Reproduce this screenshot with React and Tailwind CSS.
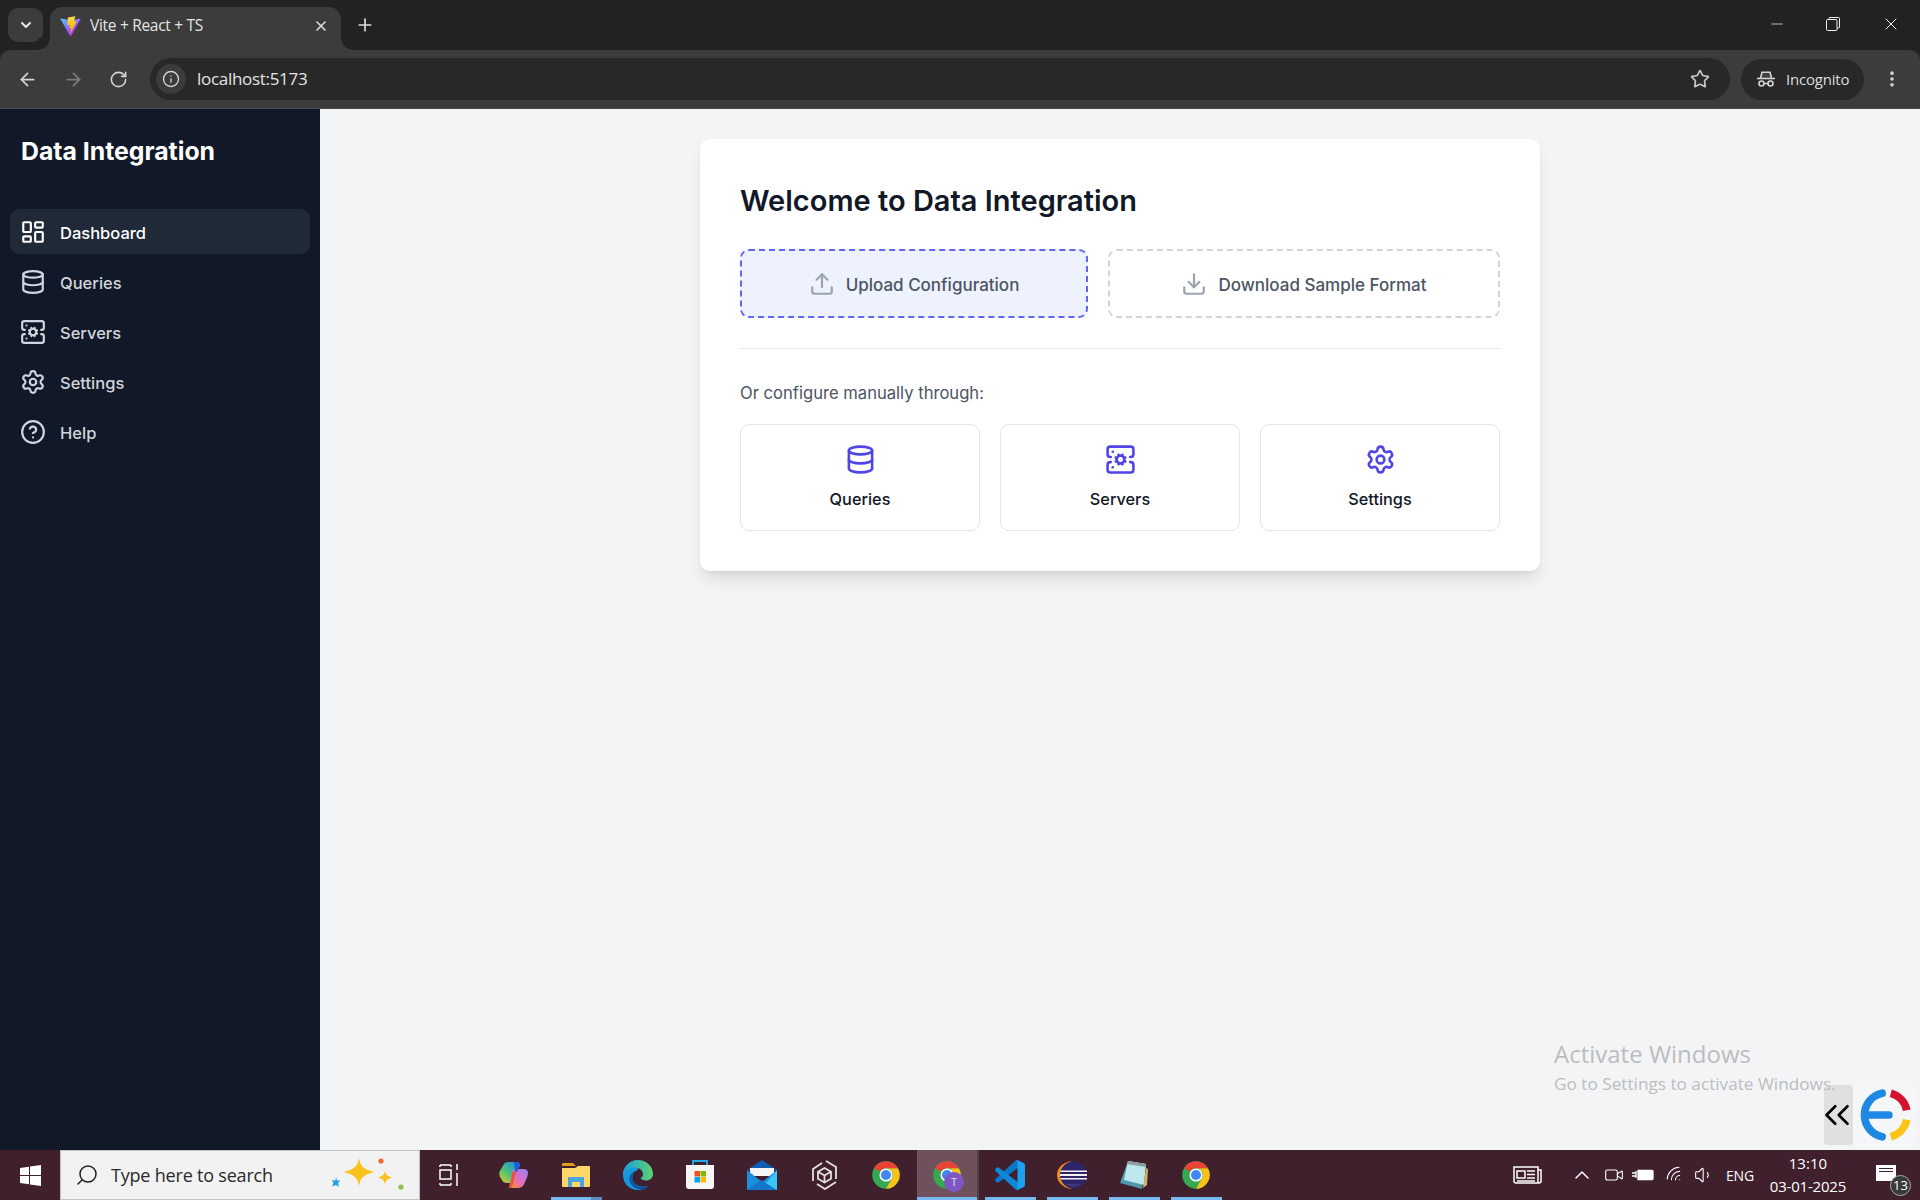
import { LayoutDashboard, Database, ServerCog, Settings, CircleHelp, Upload, Download, ArrowLeft, ArrowRight, RotateCw, Info, Star, X, Plus, ChevronDown, ChevronUp, EllipsisVertical, Search, Minus, ChevronsLeft, Volume1, Video, Wifi } from 'lucide-react';

const NAV = [
  { label: 'Dashboard', icon: LayoutDashboard, active: true },
  { label: 'Queries', icon: Database },
  { label: 'Servers', icon: ServerCog },
  { label: 'Settings', icon: Settings },
  { label: 'Help', icon: CircleHelp },
];

const SHORTCUTS = [
  { label: 'Queries', icon: Database },
  { label: 'Servers', icon: ServerCog },
  { label: 'Settings', icon: Settings },
];

const ViteIcon = () => (
  <svg width="21" height="21" viewBox="0 0 410 404">
    <defs>
      <linearGradient id="vite-a" x1="6" y1="33" x2="235" y2="344" gradientUnits="userSpaceOnUse">
        <stop offset="0" stopColor="#41d1ff" />
        <stop offset="1" stopColor="#bd34fe" />
      </linearGradient>
      <linearGradient id="vite-b" x1="194" y1="8" x2="236" y2="292" gradientUnits="userSpaceOnUse">
        <stop offset="0" stopColor="#ffea83" />
        <stop offset="0.08" stopColor="#ffdd35" />
        <stop offset="1" stopColor="#ffa800" />
      </linearGradient>
    </defs>
    <path d="M399.641 59.525 215.643 388.545c-3.799 6.793-13.558 6.833-17.415.073L10.582 59.556C6.380 52.190 12.680 43.266 21.028 44.758l184.195 32.923c1.175.21 2.378.208 3.553-.006l180.343-32.871c8.320-1.517 14.649 7.337 10.522 14.721Z" fill="url(#vite-a)" />
    <path d="M292.965 1.574 156.801 28.255a5 5 0 0 0-4.030 4.611l-8.376 141.464c-.197 3.332 2.863 5.918 6.115 5.168l37.910-8.749c3.547-.818 6.752 2.306 6.023 5.873l-11.263 55.153c-.758 3.712 2.727 6.886 6.352 5.785l23.415-7.114c3.630-1.102 7.118 2.081 6.350 5.796l-17.899 86.633c-1.120 5.419 6.088 8.374 9.094 3.728l2.008-3.103 110.955-221.428c1.858-3.707-1.346-7.935-5.418-7.150l-39.022 7.530c-3.667.707-6.787-2.708-5.752-6.296l25.469-88.291c1.036-3.594-2.095-7.012-5.766-6.291Z" fill="url(#vite-b)" />
  </svg>
);

const ChromeIcon = ({ size = 30 }) => (
  <svg width={size} height={size} viewBox="0 0 48 48">
    <circle cx="24" cy="24" r="22" fill="#34a853" />
    <path d="M43 13A22 22 0 0 1 24 46L33.5 29.5A11 11 0 0 0 24 13Z" fill="#fbc116" />
    <path d="M24 2A22 22 0 0 1 43 13H24A11 11 0 0 0 14.5 18.5L5 13A22 22 0 0 1 24 2Z" fill="#ea4335" />
    <circle cx="24" cy="24" r="10.5" fill="#fff" />
    <circle cx="24" cy="24" r="8" fill="#4285f4" />
  </svg>
);

const IncognitoIcon = () => (
  <svg width="20" height="20" viewBox="0 0 20 20" fill="none" stroke="#d4d4d4" strokeWidth="1.6">
    <path d="M4.5 9 6 3.2h8L15.5 9" fill="#d4d4d4" fillOpacity="0.15" />
    <path d="M1 9.5h18" />
    <circle cx="5.5" cy="14.5" r="2.5" />
    <circle cx="14.5" cy="14.5" r="2.5" />
    <path d="M8 14.5h4" />
  </svg>
);

const RestoreIcon = () => (
  <svg width="14" height="14" viewBox="0 0 14 14" fill="none" stroke="#f0f0f0" strokeWidth="1">
    <rect x="0.5" y="2.5" width="10.5" height="11" rx="1" />
    <path d="M3 2.5V1.5a1 1 0 0 1 1-1h8.5a1 1 0 0 1 1 1V10a1 1 0 0 1-1 1H11" />
  </svg>
);

const WindowsLogo = () => (
  <svg width="21" height="21" viewBox="0 0 21 21" fill="#fff">
    <path d="M0 3 9 1.7V10H0ZM10 1.5 21 0V10H10ZM0 11H9V19.3L0 18ZM10 11H21V21L10 19.5Z" />
  </svg>
);

const Sparkles = () => (
  <svg width="80" height="36" viewBox="0 0 80 36">
    <path d="M30 1c1.5 8 4 11 15 14-11 3-13.500 6-15 14-1.500-8-4-11-15-14 11-3 13.500-6 15-14Z" fill="#fcc21b" />
    <path d="M56 14c.8 3.500 2 5 7 6.500-5 1.500-6.200 3-7 7-.8-4-2-5.500-7-7 5-1.500 6.200-3 7-6.500Z" fill="#fcc21b" />
    <circle cx="52" cy="4" r="2.6" fill="#f4692b" />
    <circle cx="72" cy="30" r="2.6" fill="#8bc34a" />
    <path d="M7 20l1 3.500 3.500 0-2.500 2.500 1 4-3-2-4 1.500 1.500-3.500-1.500-3 3.500.5Z" fill="#1ea1e8" />
  </svg>
);

const TaskView = () => (
  <svg width="20" height="24" viewBox="0 0 20 24" fill="none" stroke="#fff" strokeWidth="1.5">
    <path d="M1 2h11M1 22h11M1 22v-2M12 22v-2M1 2v2M12 2v2" />
    <rect x="1" y="7" width="11" height="9" />
    <path d="M18 1v6M18 10v13" />
  </svg>
);

const Copilot = () => (
  <svg width="30" height="28" viewBox="0 0 30 28">
    <defs>
      <linearGradient id="cop-a" x1="0" y1="1" x2="0.8" y2="0">
        <stop offset="0" stopColor="#f7c22c" />
        <stop offset="0.45" stopColor="#52c66d" />
        <stop offset="1" stopColor="#1c8fe6" />
      </linearGradient>
      <linearGradient id="cop-b" x1="0.9" y1="0" x2="0.2" y2="1">
        <stop offset="0" stopColor="#9a7cf0" />
        <stop offset="0.6" stopColor="#e56fc0" />
        <stop offset="1" stopColor="#f7893a" />
      </linearGradient>
    </defs>
    <path d="M10 1h7c2 0 4 1 4 3 0 0-1.500 4-3 7l-5 11H8c-4 0-5-3-5-3L1 16c-1-2-1-5 1-8l3-5c1-1.500 3-2 5-2Z" fill="url(#cop-a)" />
    <path d="M15 8h9c3 0 5 1 5 4 0 2-1 5-2.500 8l-2 4c-1 2-3 3-6 3h-5c-2 0-3-1-3-3l2-9c.5-3 1-7 2.500-7Z" fill="url(#cop-b)" />
    <path d="M13 11h4l-3 11c-.5 2-1 5-3 5H9c2-1 2-3 2.500-5Z" fill="#e8533a" />
    <path d="M15 1h3c2 0 3 1 3 3l-2 5c-1 2-2 2-3 2Z" fill="#1e5fd6" />
  </svg>
);

const Explorer = () => (
  <svg width="28" height="24" viewBox="0 0 28 24">
    <path d="M0 1a1 1 0 0 1 1-1h10l3 3H0Z" fill="#dc9f1c" />
    <path d="M0 5l13 0 3-2h11a1 1 0 0 1 1 1v19a1 1 0 0 1-1 1H1a1 1 0 0 1-1-1Z" fill="#fcd767" />
    <path d="M6 14h16v10h-4v-5h-8v5H6Z" fill="#4aa4e4" />
  </svg>
);

const Edge = () => (
  <svg width="30" height="30" viewBox="0 0 30 30">
    <defs>
      <linearGradient id="edge-a" x1="0" y1="0.5" x2="1" y2="0.5">
        <stop offset="0" stopColor="#1b9de2" />
        <stop offset="1" stopColor="#5fd36e" />
      </linearGradient>
    </defs>
    <path d="M15 0C6.700 0 0 6.700 0 15c0 8.500 6.500 15 15 15 4 0 8-1.500 10-4-6 2-13 0-15.500-6-1.500-4 .5-9 5.500-10Z" fill="#1597de" />
    <path d="M15 0c9 0 15 7 15 14 0 4-3 6.500-7 6.500-3 0-5-1-5.500-2.500 1.500-.5 2.500-2 2.500-4 0-4-4.500-7-9-6.500C6 8 2 11 0 15 0 7 7 0 15 0Z" fill="url(#edge-a)" />
    <path d="M11 12c-3 1.500-5 4-4.500 8 .5 5 6 9.500 12 9.500 2.500 0 5-1.500 6.500-3.500-6 2-13 .5-15-6-.8-3 .5-6 1-8Z" fill="#0c4f96" />
    <path d="M7 20c1 5 6 8 11 8 2.500 0 5-1 7-2-6 2-12 0-15-5-1-2-.5-6 1-9-3 1.500-4.500 4.500-4 8Z" fill="#0c59a4" />
  </svg>
);

const Store = () => (
  <svg width="30" height="30" viewBox="0 0 30 30">
    <path d="M8 5V1h14v4" fill="none" stroke="#22a7e8" strokeWidth="2" />
    <path d="M1 5h28v21a3 3 0 0 1-3 3H4a3 3 0 0 1-3-3Z" fill="#f6f6f6" />
    <rect x="9.5" y="11" width="5.5" height="5.5" fill="#f25022" />
    <rect x="15.5" y="11" width="5.5" height="5.5" fill="#7fba00" />
    <rect x="9.5" y="17" width="5.5" height="5.5" fill="#00a4ef" />
    <rect x="15.5" y="17" width="5.5" height="5.5" fill="#ffb900" />
  </svg>
);

const Mail = () => (
  <svg width="30" height="30" viewBox="0 0 30 30">
    <path d="M15 0 30 10H0Z" fill="#0c5fb0" />
    <path d="M3 8h24v8H3Z" fill="#f5f5f5" />
    <path d="M0 10 15 22 30 10v20H0Z" fill="#1a8fe0" />
    <path d="M30 10v20H13Z" fill="#3bc5f5" />
    <path d="M0 30 14 20 30 30Z" fill="#1378cc" />
  </svg>
);

const CubeApp = () => (
  <svg width="27" height="30" viewBox="0 0 27 30" fill="none" stroke="#e4dfe2" strokeWidth="1.8">
    <path d="M2 21V9l9-6" />
    <path d="M15 1l10 6v12" />
    <path d="M25 22l-11 7-8-5" />
    <path d="M13.5 8l6.500 3.700v7L13.500 22.500 7 18.700v-7Z" />
    <path d="M7 11.700l6.500 3.800 6.500-3.800M13.500 15.500v7" />
  </svg>
);

const VsCode = () => (
  <svg width="30" height="30" viewBox="0 0 100 100">
    <path d="M96.461 10.796 75.857.876a6.230 6.230 0 0 0-7.107 1.207L1.299 63.583a4.167 4.167 0 0 0 .004 6.162l5.510 5.009a4.167 4.167 0 0 0 5.320.236l81.228-61.620c2.725-2.067 6.639-.124 6.639 3.297v-.240a6.250 6.250 0 0 0-3.539-5.630Z" fill="#0a78c6" />
    <path d="M96.461 89.204 75.857 99.124a6.230 6.230 0 0 1-7.107-1.207L1.299 36.417a4.167 4.167 0 0 1 .004-6.162l5.510-5.009a4.167 4.167 0 0 1 5.320-.236l81.228 61.620c2.725 2.067 6.639.124 6.639-3.297v.240a6.250 6.250 0 0 1-3.539 5.630Z" fill="#0d87d8" />
    <path d="M75.858 99.126a6.232 6.232 0 0 1-7.108-1.210c2.306 2.307 6.250.674 6.250-2.588V4.672c0-3.262-3.944-4.895-6.250-2.589a6.232 6.232 0 0 1 7.108-1.210l20.600 9.908A6.250 6.250 0 0 1 100 16.413v67.174a6.250 6.250 0 0 1-3.541 5.633l-20.601 9.906Z" fill="#1da1ee" />
  </svg>
);

const Eclipse = () => (
  <svg width="30" height="30" viewBox="0 0 30 30">
    <path d="M15 1C6 2 0 8 0 15s6 13 15 14C8 26 4 21 4 15S8 4 15 1Z" fill="#f28c1e" />
    <circle cx="16.5" cy="15" r="13.5" fill="#2f2369" />
    <path d="M3.500 10.500H30V12H3.500ZM3 14H30V16H3ZM3.500 18H30V19.500H3.500Z" fill="#f2f2f2" />
    <path d="M8 24a13.500 13.500 0 0 0 17 0Z" fill="#40367f" />
  </svg>
);

const Notepad = () => (
  <svg width="28" height="30" viewBox="0 0 28 30">
    <path d="M8 1 26 4 22 29 0 23Z" fill="#4f97ab" />
    <path d="M8 1 26 4 24 25 4 20Z" fill="#bfe8ee" />
    <path d="M8 1 26 4l-.5 3L7 4Z" fill="#8f9a9c" />
    <path d="M26 8l2 1-1 16-4 3Z" fill="#cdb26a" />
  </svg>
);

const TASK_ICONS = [
  { key: 'copilot', el: <Copilot /> },
  { key: 'explorer', el: <Explorer />, bar: true, stack: true },
  { key: 'edge', el: <Edge /> },
  { key: 'store', el: <Store /> },
  { key: 'mail', el: <Mail /> },
  { key: 'cube', el: <CubeApp /> },
  { key: 'chrome', el: <ChromeIcon /> },
  { key: 'chrome-t', el: <ChromeIcon />, active: true, badge: true },
  { key: 'vscode', el: <VsCode />, bar: true },
  { key: 'eclipse', el: <Eclipse />, bar: true },
  { key: 'notepad', el: <Notepad />, bar: true },
  { key: 'chrome2', el: <ChromeIcon />, bar: true },
];

function BrowserChrome() {
  return (
    <div className="shrink-0 bg-[#202322] font-['Open_Sans',sans-serif]">
      <div className="h-[50px] flex items-end">
        <div className="w-[50px] h-full flex items-start pl-2 pt-2">
          <div className="w-[35px] h-[34px] rounded-[10px] bg-[#3c3c3c] flex items-center justify-center">
            <ChevronDown size={16} strokeWidth={3} className="text-[#e5e5e5]" />
          </div>
        </div>
        <div className="relative w-[291px] h-[43px] bg-[#3c3c3c] rounded-t-xl flex items-center pl-[10px] pr-3 pb-[5px]">
          <span className="absolute -left-3 bottom-0 w-3 h-3 bg-[radial-gradient(circle_at_0_0,#202322_11.5px,#3c3c3c_12px)]" />
          <span className="absolute -right-3 bottom-0 w-3 h-3 bg-[radial-gradient(circle_at_100%_0,#202322_11.5px,#3c3c3c_12px)]" />
          <ViteIcon />
          <span className="ml-[9px] text-[15.5px] text-[#e4e4e4] tracking-[-0.3px]">Vite + React + TS</span>
          <X size={16} strokeWidth={2.5} className="ml-auto text-[#dcdcdc]" />
        </div>
        <div className="self-start mt-[15px] ml-[14px]">
          <Plus size={20} strokeWidth={2} className="text-[#dcdcdc]" />
        </div>
        <div className="ml-auto self-start h-[48px] flex items-center text-[#f0f0f0]">
          <div className="w-[55px] flex justify-center"><Minus size={18} strokeWidth={1} /></div>
          <div className="w-[58px] flex justify-center"><RestoreIcon /></div>
          <div className="w-[58px] flex justify-center"><X size={20} strokeWidth={1.2} /></div>
        </div>
      </div>
      <div className="h-[59px] bg-[#3c3c3c] border-b border-[#4a4a4a] rounded-t-[10px] flex items-center">
        <div className="w-[150px] flex items-center pl-[17px] gap-[25px] text-[#d4d4d4]">
          <ArrowLeft size={21} strokeWidth={2} />
          <ArrowRight size={21} strokeWidth={2} className="text-[#7c7c7c]" />
          <RotateCw size={19} strokeWidth={2} />
        </div>
        <div className="w-[1580px] h-[42px] rounded-full bg-[#282828] flex items-center pl-[6px] pr-[20px]">
          <div className="w-[30px] h-[30px] rounded-full bg-[#3c3c3c] flex items-center justify-center">
            <Info size={18} strokeWidth={1.8} className="text-[#d4d4d4]" />
          </div>
          <span className="ml-[11px] text-[17px] text-[#e4e4e4] tracking-[-0.3px]">localhost:5173</span>
          <Star size={20} strokeWidth={2} className="ml-auto text-[#c8c8c8]" />
        </div>
        <div className="ml-[11px] w-[123px] h-[41px] rounded-full bg-[#282828] flex items-center pl-[15px] gap-[10px]">
          <IncognitoIcon />
          <span className="text-[15px] text-[#dcdcdc] tracking-[-0.2px]">Incognito</span>
        </div>
        <EllipsisVertical size={20} strokeWidth={2.4} className="ml-[18px] text-[#d4d4d4]" />
      </div>
    </div>
  );
}

function Sidebar() {
  return (
    <aside className="w-[320px] shrink-0 bg-[#111827] px-[10px]">
      <h1 className="pl-[11px] pt-[26px] h-[100px] text-[24.8px] leading-[32px] font-bold text-white">Data Integration</h1>
      <nav className="flex flex-col gap-[5px]">
        {NAV.map(({ label, icon: Icon, active }) => (
          <div
            key={label}
            className={`h-[45px] rounded-[9px] flex items-center pl-[10px] gap-[14px] text-[16.5px] font-medium ${active ? 'bg-[#1f2937] text-white' : 'text-[#d1d5db]'}`}
          >
            <Icon size={26} strokeWidth={2} />
            <span className="mt-[3px]">{label}</span>
          </div>
        ))}
      </nav>
    </aside>
  );
}

function Welcome() {
  return (
    <main className="relative flex-1 bg-[#f3f4f6] flex justify-center pt-[30px]">
      <div className="w-[840px] h-[432px] bg-white rounded-[10px] shadow-[0_11px_17px_-3px_rgba(0,0,0,0.1),0_4px_7px_-4px_rgba(0,0,0,0.1)] p-10">
        <h2 className="text-[29px] leading-[44px] font-semibold text-[#111827]">Welcome to Data Integration</h2>
        <div className="mt-[26px] grid grid-cols-[348px_1fr] gap-5">
          <button className="h-[69px] rounded-[9px] border-2 border-dashed border-[#6366f1] bg-[#eef2ff] flex items-center justify-center gap-[11px] text-[17px] font-medium text-[#4b5563]">
            <Upload size={26} strokeWidth={2} className="text-[#9ca3af]" />
            <span className="mt-[4px]">Upload Configuration</span>
          </button>
          <button className="h-[69px] rounded-[9px] border-2 border-dashed border-[#d1d5db] flex items-center justify-center gap-[11px] text-[17px] font-medium text-[#4b5563]">
            <Download size={26} strokeWidth={2} className="text-[#9ca3af]" />
            <span className="mt-[4px]">Download Sample Format</span>
          </button>
        </div>
        <div className="mt-[30px] border-t border-[#e5e7eb]" />
        <p className="mt-[31px] text-[16.6px] leading-[26px] text-[#4b5563]">Or configure manually through:</p>
        <div className="mt-[18px] grid grid-cols-3 gap-5">
          {SHORTCUTS.map(({ label, icon: Icon }) => (
            <div key={label} className="h-[107px] rounded-[9px] border border-[#e5e7eb] flex flex-col items-center pt-[19px]">
              <Icon size={31} strokeWidth={2} className="text-[#4f46e5]" />
              <span className="mt-[11px] text-[16.3px] leading-[26px] font-medium text-[#111827]">{label}</span>
            </div>
          ))}
        </div>
      </div>

      <div className="absolute right-[4px] bottom-[2px] w-[92px] h-[66px] flex items-stretch">
        <div className="w-[29px] my-[3px] rounded-[4px] bg-[#e0e0e0] flex items-center justify-center overflow-hidden pr-[4px]">
          <ChevronsLeft size={42} strokeWidth={1.5} className="text-black shrink-0" />
        </div>
        <div className="flex-1 rounded-r-[6px] bg-[#f5f6f8] flex items-center justify-center">
          <svg width="58" height="58" viewBox="0 0 60 60" fill="none" strokeWidth="8">
            <path d="M27 7.500A23 23 0 0 0 27 52.500M10 30H34" stroke="#1e88e5" strokeLinecap="round" />
            <path d="M36 7.500A23 23 0 0 1 52.500 25" stroke="#d3122f" />
            <path d="M52.500 35A23 23 0 0 1 36 52.500" stroke="#fcc419" />
          </svg>
        </div>
      </div>

      <div className="absolute left-[1234px] top-[930px] font-['Open_Sans',sans-serif] text-[#bcbdbf]">
        <div className="text-[24px] leading-[30px]">Activate Windows</div>
        <div className="text-[17.2px] leading-[24px] mt-[3px] whitespace-nowrap">Go to Settings to activate Windows.</div>
      </div>
    </main>
  );
}

function Taskbar() {
  return (
    <div className="h-[50px] shrink-0 bg-[#3f202c] flex items-center text-white font-['Open_Sans',sans-serif]">
      <div className="w-[60px] flex justify-center"><WindowsLogo /></div>
      <div className="w-[360px] h-full bg-[#f2f2f2] border border-[#c4c4c4] flex items-center pl-[14px] relative">
        <Search size={24} strokeWidth={1.5} className="text-[#222] -scale-x-100" />
        <span className="ml-[12px] text-[18px] text-[#2a2a2a] tracking-[-0.2px]">Type here to search</span>
        <div className="absolute right-[10px] top-[6px]"><Sparkles /></div>
      </div>
      <div className="w-[58px] flex justify-center"><TaskView /></div>
      <div className="flex h-full ml-[5px]">
        {TASK_ICONS.map(({ key, el, active, bar, stack, badge }) => (
          <div key={key} className={`relative w-[62px] h-full flex items-center justify-center ${active ? 'bg-[#6e515c] border-r-2 border-[#524049]' : ''}`}>
            {el}
            {badge && (
              <span className="absolute left-[27px] top-[22px] w-[20px] h-[20px] rounded-full bg-[#7e57c2] text-[11px] leading-[20px] text-center text-[#ddd]">T</span>
            )}
            {active && <span className="absolute bottom-0 left-0 right-0 h-[3px] bg-[#76b9ed]" />}
            {bar && <span className="absolute bottom-0 h-[3px] w-[51px] bg-[#76b9ed]" />}
            {stack && <span className="absolute bottom-0 left-[46px] h-[3px] w-[11px] bg-[#5b8db8]" />}
          </div>
        ))}
      </div>
      <div className="ml-auto h-full relative w-[420px]">
        <div className="absolute inset-0 flex items-center">
          <svg className="ml-[13px]" width="30" height="20" viewBox="0 0 30 20" fill="none" stroke="#fff" strokeWidth="1.5">
            <path d="M1 2h24v16H3a2 2 0 0 1-2-2ZM25 5h3v11a2 2 0 0 1-2 2h-1" />
            <path d="M4 6h8v7H4ZM14 6h8M14 9.500h8M14 13h8M4 16h18" />
          </svg>
          <ChevronUp size={24} strokeWidth={1.5} className="ml-[27px]" />
          <Video size={20} strokeWidth={1.3} className="ml-[10px]" />
          <svg className="ml-[8px]" width="22" height="14" viewBox="0 0 22 14" fill="none" stroke="#fff" strokeWidth="1.3">
            <path d="M6 2.500h14a1 1 0 0 1 1 1v7a1 1 0 0 1-1 1H6Z" fill="#fff" />
            <path d="M0 5h4M0 8h4M4 3v7" />
          </svg>
          <Wifi size={20} strokeWidth={1.3} className="ml-[11px] -rotate-45" />
          <Volume1 size={20} strokeWidth={1.3} className="ml-[9px]" />
          <span className="ml-[12px] text-[14px] tracking-[-0.2px]">ENG</span>
          <div className="ml-[14px] w-[80px] text-center text-[15px] leading-[23px]">
            <div>13:10</div>
            <div className="whitespace-nowrap tracking-[-0.2px]">03-01-2025</div>
          </div>
        </div>
        <div className="absolute right-[24px] top-[15px] w-[20px] h-[16px] bg-white flex flex-col gap-[2px] p-[3px]">
          <span className="h-px bg-[#3f202c]" />
          <span className="h-px bg-[#3f202c]" />
        </div>
        <span className="absolute right-[9px] top-[25px] w-[21px] h-[21px] rounded-full bg-[#3a3a3a] border border-[#aaa] text-[13px] leading-[19px] text-center">13</span>
      </div>
    </div>
  );
}

export default function App() {
  return (
    <div className="w-[1920px] h-[1200px] flex flex-col overflow-hidden font-[Inter,sans-serif]">
      <BrowserChrome />
      <div className="flex flex-1 min-h-0">
        <Sidebar />
        <Welcome />
      </div>
      <Taskbar />
    </div>
  );
}
